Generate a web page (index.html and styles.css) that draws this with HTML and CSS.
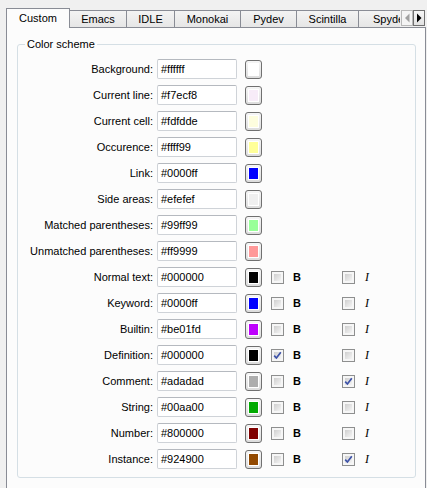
FILE: index.html
```html
<!DOCTYPE html>
<html>
<head>
<meta charset="utf-8">
<link rel="stylesheet" href="styles.css">
</head>
<body>
<div class="window">
  <div class="tabbar">
    <div class="tabs">
      <div class="tab active t-custom">Custom</div>
      <div class="tab t-emacs">Emacs</div>
      <div class="tab t-idle">IDLE</div>
      <div class="tab t-monokai">Monokai</div>
      <div class="tab t-pydev">Pydev</div>
      <div class="tab t-scintilla">Scintilla</div>
      <div class="tab t-spyder">Spyder</div>
    </div>
    <div class="scroller">
      <span class="sbtn disabled"><svg width="10" height="14" viewBox="0 0 10 14"><path d="M7.5 2.5 L3 7 L7.5 11.5 Z" fill="#a0a0a0"/></svg></span>
      <span class="sbtn"><svg width="10" height="14" viewBox="0 0 10 14"><path d="M3 2.5 L7.5 7 L3 11.5 Z" fill="#000"/></svg></span>
    </div>
  </div>
  <div class="pane">
    <fieldset class="group">
      <legend>Color scheme</legend>
      <div class="rows">
        <div class="row"><span class="lbl">Background:</span><span class="field">#ffffff</span><span class="swatch"><span class="fill" style="--c:#ffffff"></span></span></div>
        <div class="row"><span class="lbl">Current line:</span><span class="field">#f7ecf8</span><span class="swatch"><span class="fill" style="--c:#f7ecf8"></span></span></div>
        <div class="row"><span class="lbl">Current cell:</span><span class="field">#fdfdde</span><span class="swatch"><span class="fill" style="--c:#fdfdde"></span></span></div>
        <div class="row"><span class="lbl">Occurence:</span><span class="field">#ffff99</span><span class="swatch"><span class="fill" style="--c:#ffff99"></span></span></div>
        <div class="row"><span class="lbl">Link:</span><span class="field">#0000ff</span><span class="swatch"><span class="fill" style="--c:#0000ff"></span></span></div>
        <div class="row"><span class="lbl">Side areas:</span><span class="field">#efefef</span><span class="swatch"><span class="fill" style="--c:#efefef"></span></span></div>
        <div class="row"><span class="lbl">Matched parentheses:</span><span class="field">#99ff99</span><span class="swatch"><span class="fill" style="--c:#99ff99"></span></span></div>
        <div class="row"><span class="lbl">Unmatched parentheses:</span><span class="field">#ff9999</span><span class="swatch"><span class="fill" style="--c:#ff9999"></span></span></div>

        <div class="row"><span class="lbl">Normal text:</span><span class="field">#000000</span><span class="swatch"><span class="fill" style="--c:#000000"></span></span><span class="cb"></span><span class="bold">B</span><span class="cb"></span><span class="ital">I</span></div>
        <div class="row"><span class="lbl">Keyword:</span><span class="field">#0000ff</span><span class="swatch"><span class="fill" style="--c:#0000ff"></span></span><span class="cb"></span><span class="bold">B</span><span class="cb"></span><span class="ital">I</span></div>
        <div class="row"><span class="lbl">Builtin:</span><span class="field">#be01fd</span><span class="swatch"><span class="fill" style="--c:#be01fd"></span></span><span class="cb"></span><span class="bold">B</span><span class="cb"></span><span class="ital">I</span></div>
        <div class="row"><span class="lbl">Definition:</span><span class="field">#000000</span><span class="swatch"><span class="fill" style="--c:#000000"></span></span><span class="cb checked"><svg width="9" height="9" viewBox="0 0 9 9"><path d="M1.2 4.6 L3.4 7 L7.8 1.2" fill="none" stroke="#3d52a8" stroke-width="1.7"/></svg></span><span class="bold">B</span><span class="cb"></span><span class="ital">I</span></div>
        <div class="row"><span class="lbl">Comment:</span><span class="field">#adadad</span><span class="swatch"><span class="fill" style="--c:#adadad"></span></span><span class="cb"></span><span class="bold">B</span><span class="cb checked"><svg width="9" height="9" viewBox="0 0 9 9"><path d="M1.2 4.6 L3.4 7 L7.8 1.2" fill="none" stroke="#3d52a8" stroke-width="1.7"/></svg></span><span class="ital">I</span></div>
        <div class="row"><span class="lbl">String:</span><span class="field">#00aa00</span><span class="swatch"><span class="fill" style="--c:#00aa00"></span></span><span class="cb"></span><span class="bold">B</span><span class="cb"></span><span class="ital">I</span></div>
        <div class="row"><span class="lbl">Number:</span><span class="field">#800000</span><span class="swatch"><span class="fill" style="--c:#800000"></span></span><span class="cb"></span><span class="bold">B</span><span class="cb"></span><span class="ital">I</span></div>
        <div class="row"><span class="lbl">Instance:</span><span class="field">#924900</span><span class="swatch"><span class="fill" style="--c:#924900"></span></span><span class="cb"></span><span class="bold">B</span><span class="cb checked"><svg width="9" height="9" viewBox="0 0 9 9"><path d="M1.2 4.6 L3.4 7 L7.8 1.2" fill="none" stroke="#3d52a8" stroke-width="1.7"/></svg></span><span class="ital">I</span></div>
      </div>
    </fieldset>
  </div>
</div>
</body>
</html>
```

FILE: styles.css
```css
* { box-sizing: border-box; }
html, body { margin: 0; padding: 0; }
body {
  background: #f0f0f0;
  font-family: "Liberation Sans", Arial, sans-serif;
  font-size: 11px;
  color: #000;
  width: 427px;
  height: 488px;
  overflow: hidden;
}
.window {
  padding: 8px 2px 0 6px;
}
.tabbar {
  display: flex;
  height: 20px;
}
.tabs {
  display: flex;
  width: 394px;
  flex: none;
  height: 20px;
  overflow: hidden;
  position: relative;
  z-index: 2;
}
.tab {
  flex: none;
  height: 17px;
  margin-top: 2px;
  line-height: 15px;
  text-align: center;
  white-space: nowrap;
  border: 1px solid #898c95;
  border-left: none;
  border-bottom: none;
  background: linear-gradient(#f3f3f3, #e6e6e6);
  padding-top: 1px;
}
.tab.active {
  height: 20px;
  margin-top: 0;
  border-left: 1px solid #898c95;
  background: #fcfcfc;
  line-height: 17px;
  padding-top: 1px;
}
.t-custom { width: 64px; }
.t-emacs { width: 57px; }
.t-idle { width: 48px; }
.t-monokai { width: 66px; }
.t-pydev { width: 56px; }
.t-scintilla { width: 62px; }
.t-spyder { width: 62px; text-align: left; padding-left: 14px; }
.scroller {
  display: flex;
  flex: none;
  margin-top: 2px;
  margin-left: 1px;
  height: 16px;
}
.sbtn {
  flex: none;
  width: 12px;
  height: 16px;
  border: 1px solid #707070;
  background: linear-gradient(#f7f7f7, #e2e2e2);
  display: flex;
  align-items: center;
  justify-content: center;
}
.sbtn + .sbtn { border-left: 1px solid #707070; }
.sbtn.disabled { border-color: #b8b8b8; background: #f4f4f4; }
.pane {
  position: relative;
  z-index: 1;
  margin-top: -1px;
  border: 1px solid #898c95;
  background: #fcfcfc;
  padding: 10px 9px 12px 10px;
  width: 420px;
}
.group {
  margin: 0;
  min-width: 0;
  padding: 8px 0 8px 0;
  border: 1px solid #d5dfe5;
  border-radius: 3px;
}
.group legend {
  margin-left: 7px;
  padding: 0 2px;
  line-height: 13px;
  font-size: 11px;
}
.rows {
  display: flex;
  flex-direction: column;
  gap: 6px;
}
.row {
  display: flex;
  align-items: center;
  height: 20px;
}
.lbl {
  width: 135px;
  text-align: right;
  white-space: nowrap;
}
.field {
  margin-left: 4px;
  width: 80px;
  height: 20px;
  border: 1px solid #cfd3d8;
  border-top-color: #b5b9bf;
  border-radius: 2px;
  background: #fff;
  padding-left: 3px;
  line-height: 18px;
}
.swatch {
  margin-left: 8px;
  width: 17px;
  height: 19px;
  border: 1px solid #707070;
  border-radius: 3px;
  background: linear-gradient(#f6f6f6, #dcdcdc);
  padding: 2px;
  display: flex;
}
.fill {
  flex: 1;
  background: var(--c);
  border: 1px solid #fff;
}
.cb {
  margin-left: 9px;
  width: 13px;
  height: 13px;
  border: 1px solid #8e8f8f;
  padding: 2px;
  background: linear-gradient(135deg, #cfcfcf, #f4f4f4) content-box, #f6f6f6;
  display: flex;
  align-items: center;
  justify-content: center;
  position: relative;
}
.cb svg { position: absolute; left: 1px; top: 1px; }
.bold {
  margin-left: 9px;
  width: 40px;
  font-weight: bold;
}
.ital {
  margin-left: 10px;
  font-family: "Liberation Serif", "Times New Roman", serif;
  font-style: italic;
  font-size: 12px;
}
```
